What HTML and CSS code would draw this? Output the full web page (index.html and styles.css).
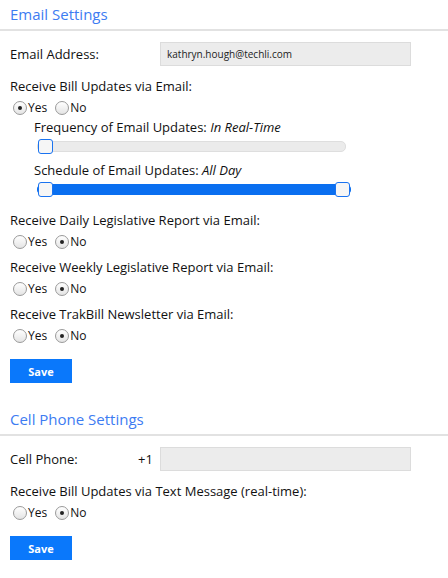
FILE: index.html
```html
<!DOCTYPE html>
<html lang="en">
<head>
    <meta charset="UTF-8">
    <meta name="viewport" content="width=device-width, initial-scale=1.0">
    <title>Notification Settings</title>
    <link rel="stylesheet" href="styles.css">
</head>
<body>

<div class="settings">
    <h2 class="section-title">Email Settings</h2>

    <div class="field-row">
        <label class="field-label">Email Address:</label>
        <div class="text-input">kathryn.hough@techli.com</div>
    </div>

    <div class="question first">
        <div class="question-label">Receive Bill Updates via Email:</div>
        <div class="radios">
            <span class="radio checked"></span><span class="radio-text">Yes</span>
            <span class="radio"></span><span class="radio-text">No</span>
        </div>
    </div>

    <div class="slider-block">
        <div class="slider-label">Frequency of Email Updates: <em>In Real-Time</em></div>
        <div class="slider">
            <span class="handle"></span>
        </div>
        <div class="slider-label">Schedule of Email Updates: <em>All Day</em></div>
        <div class="slider range">
            <span class="handle"></span>
            <span class="handle"></span>
        </div>
    </div>

    <div class="question">
        <div class="question-label">Receive Daily Legislative Report via Email:</div>
        <div class="radios">
            <span class="radio"></span><span class="radio-text">Yes</span>
            <span class="radio checked"></span><span class="radio-text">No</span>
        </div>
    </div>

    <div class="question">
        <div class="question-label">Receive Weekly Legislative Report via Email:</div>
        <div class="radios">
            <span class="radio"></span><span class="radio-text">Yes</span>
            <span class="radio checked"></span><span class="radio-text">No</span>
        </div>
    </div>

    <div class="question">
        <div class="question-label">Receive TrakBill Newsletter via Email:</div>
        <div class="radios">
            <span class="radio"></span><span class="radio-text">Yes</span>
            <span class="radio checked"></span><span class="radio-text">No</span>
        </div>
    </div>

    <button class="save-btn">Save</button>

    <h2 class="section-title second">Cell Phone Settings</h2>

    <div class="field-row">
        <label class="field-label">Cell Phone:</label>
        <span class="prefix">+1</span>
        <div class="text-input"></div>
    </div>

    <div class="question first">
        <div class="question-label">Receive Bill Updates via Text Message (real-time):</div>
        <div class="radios">
            <span class="radio"></span><span class="radio-text">Yes</span>
            <span class="radio checked"></span><span class="radio-text">No</span>
        </div>
    </div>

    <button class="save-btn">Save</button>
</div>

</body>
</html>
```

FILE: styles.css
```css
body {
    font-family: 'Open Sans', 'Liberation Sans', sans-serif;
    background-color: #ffffff;
    color: #111111;
    margin: 0;
    font-size: 13px;
}

.settings {
    padding: 0 0 20px 0;
}

.section-title {
    font-size: 15px;
    font-weight: 400;
    color: #3d7cf2;
    margin: 0;
    padding: 4px 10px 5px;
    border-bottom: 2px solid #e2e2e2;
}

.section-title.second {
    margin-top: 22px;
}

.field-row {
    display: flex;
    align-items: center;
    padding: 0 10px;
    margin-top: 10px;
    height: 26px;
}

.field-label {
    width: 128px;
}

.prefix {
    width: 22px;
}

.text-input {
    width: 243px;
    height: 22px;
    line-height: 22px;
    padding: 0 0 0 6px;
    margin-left: 22px;
    background-color: #ececec;
    border: 1px solid #dcdcdc;
    font-size: 10px;
    color: #222;
}

.prefix + .text-input {
    margin-left: 0;
}

.question {
    padding: 0 10px;
    margin-top: 6px;
}

.question.first {
    margin-top: 10px;
}

.question-label {
    line-height: 18px;
}

.radios {
    display: flex;
    align-items: center;
    height: 21px;
    margin-top: 2px;
    padding-left: 3px;
}

.radio {
    width: 12px;
    height: 12px;
    border: 1px solid #9a9a9a;
    border-radius: 50%;
    background: linear-gradient(#ffffff, #e4e4e4);
    position: relative;
    margin-right: 1px;
}

.radio.checked::after {
    content: "";
    position: absolute;
    left: 4px;
    top: 4px;
    width: 4px;
    height: 4px;
    border-radius: 50%;
    background-color: #222;
}

.radio-text {
    font-size: 12px;
    margin-right: 8px;
}

.slider-block {
    padding: 0 0 0 34px;
}

.slider-label {
    line-height: 18px;
    margin-bottom: 5px;
}

.slider-label em {
    font-style: italic;
}

.slider {
    width: 307px;
    height: 9px;
    margin: 0 0 9px 3px;
    background-color: #ebebeb;
    border: 1px solid #dedede;
    border-radius: 5px;
    display: flex;
    align-items: center;
    justify-content: space-between;
}

.slider.range {
    background-color: #0a6ff0;
    border-color: #0a6ff0;
    width: 312px;
    margin-bottom: 16px;
}

.handle {
    width: 13px;
    height: 13px;
    background-color: #f6f6f6;
    border: 1px solid #1a73f0;
    border-radius: 3px;
    flex-shrink: 0;
}

.save-btn {
    display: block;
    margin: 13px 0 0 10px;
    width: 62px;
    height: 24px;
    background-color: #0a78fb;
    color: #ffffff;
    border: none;
    font-family: 'Open Sans', sans-serif;
    font-weight: 700;
    font-size: 11px;
    padding: 0;
    cursor: pointer;
}
```
